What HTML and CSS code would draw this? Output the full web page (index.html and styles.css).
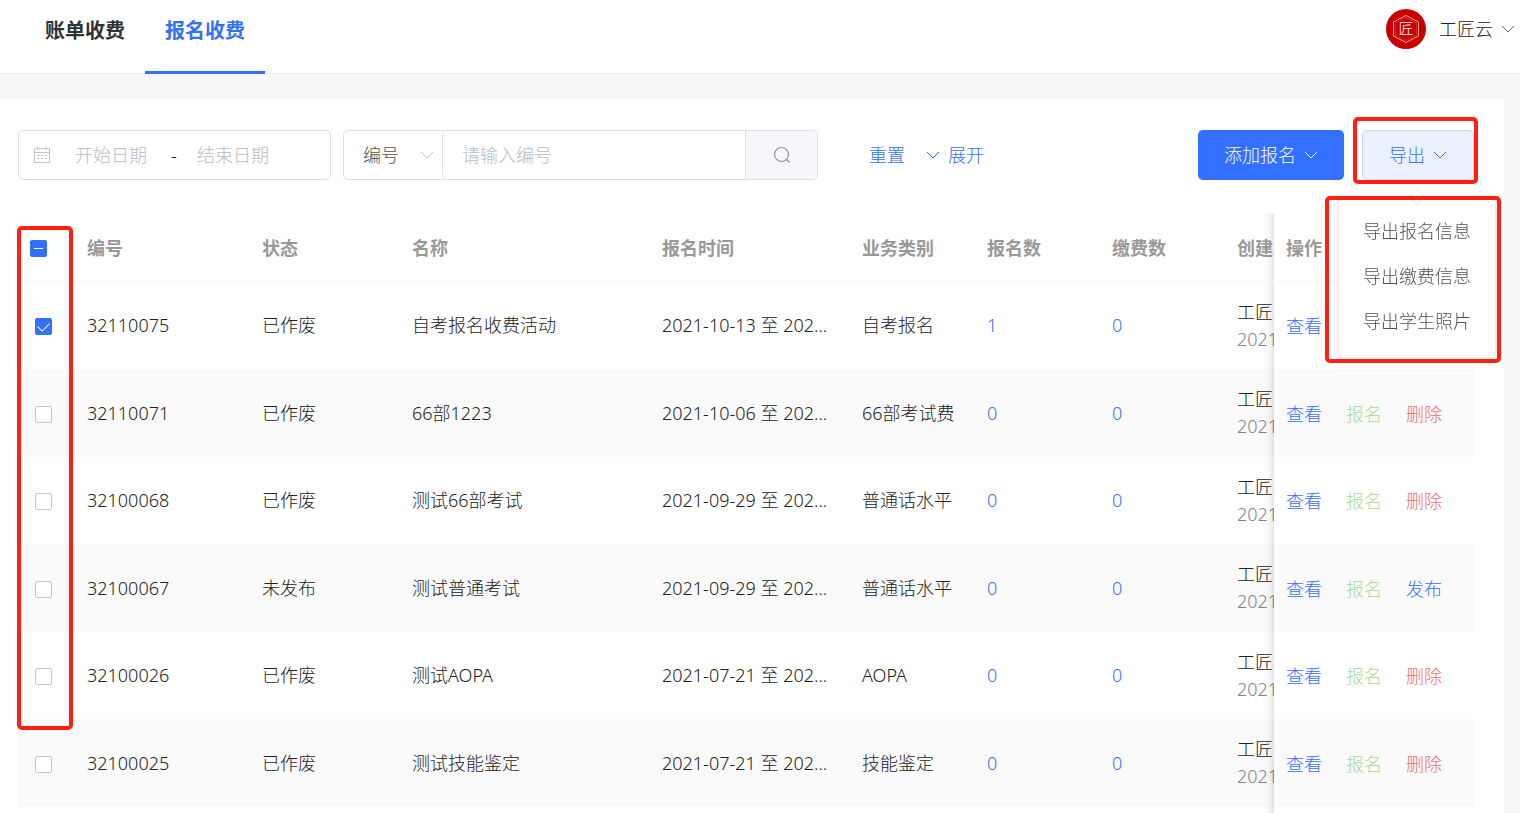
FILE: index.html
```html
<!DOCTYPE html>
<html lang="zh-CN">
<head>
    <meta charset="UTF-8">
    <title>报名收费</title>
    <link rel="stylesheet" href="styles.css">
</head>
<body>
    <svg class="sprite" aria-hidden="true">
        <symbol id="arrow" viewBox="0 0 14 8">
            <path d="M1 1l6 6 6-6" fill="none" stroke="currentColor" stroke-width="1"/>
        </symbol>
    </svg>

    <!-- 头部 -->
    <header class="header">
        <nav class="tabs">
            <a class="tab" href="#">账单收费</a>
            <a class="tab active" href="#">报名收费</a>
        </nav>
        <button class="user" type="button">
            <svg class="avatar" viewBox="0 0 40 40">
                <circle cx="20" cy="20" r="20" fill="#c80000"/>
                <path d="M20 6.500l12.500 6.500v14L20 33.500 7.500 27V13z" fill="none" stroke="#f0a0a0" stroke-width="1"/>
                <path d="M20 8.500l10.500 5.500v12L20 31.500 9.500 26V14z" fill="none" stroke="#d84848" stroke-width=".6"/>
                <text class="avatar-text" x="20" y="25" text-anchor="middle">匠</text>
            </svg>
            <span>工匠云</span>
            <svg class="arrow"><use href="#arrow"/></svg>
        </button>
    </header>

    <main class="panel">
        <!-- 搜索栏 -->
        <div class="toolbar">
            <div class="date-range">
                <svg class="icon-date" viewBox="0 0 18 18">
                    <path d="M1.500 2.500h15v14h-15zM1.500 6.500h15M5 .5v4M13 .5v4" fill="none" stroke="currentColor"/>
                    <path d="M4 9.500h2.500M7.800 9.500h2.500M11.500 9.500h2.500M4 12.500h2.500M7.800 12.500h2.500M11.500 12.500h2.500" stroke="currentColor" stroke-width="1.200"/>
                </svg>
                <input class="date-input" type="text" placeholder="开始日期" aria-label="开始日期">
                <span class="date-sep">-</span>
                <input class="date-input" type="text" placeholder="结束日期" aria-label="结束日期">
            </div>
            <div class="search">
                <div class="search-type">
                    <select class="search-select" aria-label="搜索类型">
                        <option>编号</option>
                    </select>
                    <svg class="arrow search-arrow"><use href="#arrow"/></svg>
                </div>
                <input class="search-input" type="text" placeholder="请输入编号" aria-label="请输入编号">
                <button class="search-btn" type="button" aria-label="搜索">
                    <svg class="icon-search" viewBox="0 0 18 18">
                        <circle cx="8.500" cy="8.500" r="7" fill="none" stroke="currentColor" stroke-width="1.200"/>
                        <path d="M13.500 13.500l3 3" stroke="currentColor" stroke-width="1.200"/>
                    </svg>
                </button>
            </div>
            <div class="links">
                <a class="link" href="#">重置</a>
                <a class="link more" href="#"><svg class="arrow"><use href="#arrow"/></svg>展开</a>
            </div>
            <div class="actions">
                <button class="btn btn-primary" type="button">添加报名<svg class="arrow"><use href="#arrow"/></svg></button>
                <div class="export">
                    <button class="btn btn-plain" type="button">导出<svg class="arrow"><use href="#arrow"/></svg></button>
                    <i class="mark mark-btn"></i>
                    <div class="menu">
                        <button class="menu-item" type="button">导出报名信息</button>
                        <button class="menu-item" type="button">导出缴费信息</button>
                        <button class="menu-item" type="button">导出学生照片</button>
                        <i class="mark mark-menu"></i>
                    </div>
                </div>
            </div>
        </div>

        <!-- 列表 -->
        <div class="table-box">
            <div class="table-scroll">
                <table class="table">
                    <colgroup>
                        <col class="w-check">
                        <col class="w-no">
                        <col class="w-status">
                        <col class="w-name">
                        <col class="w-time">
                        <col class="w-num">
                        <col class="w-num">
                        <col class="w-num">
                        <col class="w-creator">
                        <col class="w-ops">
                    </colgroup>
                    <thead>
                        <tr>
                            <th><input class="check half" type="checkbox" aria-label="全选"></th>
                            <th>编号</th>
                            <th>状态</th>
                            <th>名称</th>
                            <th>报名时间</th>
                            <th>业务类别</th>
                            <th>报名数</th>
                            <th>缴费数</th>
                            <th>创建人</th>
                            <th class="fixed">操作</th>
                        </tr>
                    </thead>
                    <tbody>
                        <tr>
                            <td class="sel"><input class="check" type="checkbox" aria-label="32110075" checked></td>
                            <td>32110075</td>
                            <td>已作废</td>
                            <td>自考报名收费活动</td>
                            <td>2021-10-13 至 202...</td>
                            <td>自考报名</td>
                            <td><a class="link" href="#">1</a></td>
                            <td><a class="link" href="#">0</a></td>
                            <td>工匠云<p class="date">2021-</p></td>
                            <td class="fixed"><a class="op" href="#">查看</a></td>
                        </tr>
                        <tr>
                            <td class="sel"><input class="check" type="checkbox" aria-label="32110071"></td>
                            <td>32110071</td>
                            <td>已作废</td>
                            <td>66部1223</td>
                            <td>2021-10-06 至 202...</td>
                            <td>66部考试费</td>
                            <td><a class="link" href="#">0</a></td>
                            <td><a class="link" href="#">0</a></td>
                            <td>工匠云<p class="date">2021-</p></td>
                            <td class="fixed"><a class="op" href="#">查看</a><a class="op green" href="#">报名</a><a class="op red" href="#">删除</a></td>
                        </tr>
                        <tr>
                            <td class="sel"><input class="check" type="checkbox" aria-label="32100068"></td>
                            <td>32100068</td>
                            <td>已作废</td>
                            <td>测试66部考试</td>
                            <td>2021-09-29 至 202...</td>
                            <td>普通话水平</td>
                            <td><a class="link" href="#">0</a></td>
                            <td><a class="link" href="#">0</a></td>
                            <td>工匠云<p class="date">2021-</p></td>
                            <td class="fixed"><a class="op" href="#">查看</a><a class="op green" href="#">报名</a><a class="op red" href="#">删除</a></td>
                        </tr>
                        <tr>
                            <td class="sel"><input class="check" type="checkbox" aria-label="32100067"></td>
                            <td>32100067</td>
                            <td>未发布</td>
                            <td>测试普通考试</td>
                            <td>2021-09-29 至 202...</td>
                            <td>普通话水平</td>
                            <td><a class="link" href="#">0</a></td>
                            <td><a class="link" href="#">0</a></td>
                            <td>工匠云<p class="date">2021-</p></td>
                            <td class="fixed"><a class="op" href="#">查看</a><a class="op green" href="#">报名</a><a class="op" href="#">发布</a></td>
                        </tr>
                        <tr>
                            <td class="sel"><input class="check" type="checkbox" aria-label="32100026"></td>
                            <td>32100026</td>
                            <td>已作废</td>
                            <td>测试AOPA</td>
                            <td>2021-07-21 至 202...</td>
                            <td>AOPA</td>
                            <td><a class="link" href="#">0</a></td>
                            <td><a class="link" href="#">0</a></td>
                            <td>工匠云<p class="date">2021-</p></td>
                            <td class="fixed"><a class="op" href="#">查看</a><a class="op green" href="#">报名</a><a class="op red" href="#">删除</a></td>
                        </tr>
                        <tr>
                            <td class="sel"><input class="check" type="checkbox" aria-label="32100025"></td>
                            <td>32100025</td>
                            <td>已作废</td>
                            <td>测试技能鉴定</td>
                            <td>2021-07-21 至 202...</td>
                            <td>技能鉴定</td>
                            <td><a class="link" href="#">0</a></td>
                            <td><a class="link" href="#">0</a></td>
                            <td>工匠云<p class="date">2021-</p></td>
                            <td class="fixed"><a class="op" href="#">查看</a><a class="op green" href="#">报名</a><a class="op red" href="#">删除</a></td>
                        </tr>
                    </tbody>
                    <tfoot>
                        <tr>
                            <td colspan="9"></td>
                            <td class="fixed"></td>
                        </tr>
                    </tfoot>
                </table>
            </div>
            <i class="mark mark-check"></i>
        </div>
    </main>
</body>
</html>
```
FILE: styles.css
```css
* {
    box-sizing: border-box;
}

body {
    margin: 0;
    background: #f7f8fa;
    color: #222;
    font-family: "Noto Sans", "Noto Sans CJK SC", sans-serif;
    font-size: 18px;
    font-weight: 300;
    line-height: 27px;
}

a {
    text-decoration: none;
}

button,
input,
select {
    margin: 0;
    padding: 0;
    border: 0;
    background: none;
    color: inherit;
    font: inherit;
    outline: none;
}

input::placeholder {
    color: #b8bcc4;
    opacity: 1;
}

.sprite {
    display: none;
}

.arrow {
    width: 14px;
    height: 8px;
    flex: none;
}

/* 头部 */
.header {
    display: flex;
    justify-content: space-between;
    align-items: flex-start;
    height: 74px;
    padding: 0 5px 0 25px;
    background: #fff;
    border-bottom: 1px solid #f0f0f2;
}

.tabs {
    display: flex;
}

.tab {
    height: 74px;
    padding: 0 20px;
    color: #303133;
    font-size: 20px;
    font-weight: bold;
    line-height: 62px;
}

.tab.active {
    color: #3370ff;
    border-bottom: 3px solid #3370ff;
}

.user {
    display: flex;
    align-items: center;
    gap: 8px;
    padding-top: 9px;
}

.avatar {
    width: 40px;
    height: 40px;
    margin-right: 5px;
}

.avatar-text {
    fill: #fff;
    font-size: 15px;
}

.user .arrow {
    color: #606266;
}

/* 内容 */
.panel {
    margin: 25px 16px 0 0;
    padding: 31px 30px 0 18px;
    background: #fff;
}

.toolbar {
    display: flex;
    align-items: center;
    margin-bottom: 33px;
}

.date-range {
    display: flex;
    align-items: center;
    width: 313px;
    height: 50px;
    padding: 0 14px;
    border: 1px solid #dcdfe6;
    border-radius: 5px;
}

.icon-date {
    width: 18px;
    height: 18px;
    margin-right: 24px;
    color: #c0c4cc;
}

.date-input {
    width: 86px;
}

.date-sep {
    width: 36px;
    padding-left: 10px;
}

.search {
    display: flex;
    width: 475px;
    height: 50px;
    margin-left: 12px;
    border: 1px solid #dcdfe6;
    border-radius: 5px;
}

.search-type {
    display: flex;
    align-items: center;
    width: 98px;
    color: #505256;
}

.search-select {
    width: 76px;
    height: 48px;
    padding-left: 19px;
    appearance: none;
}

.search-arrow {
    color: #c0c4cc;
}

.search-input {
    flex: 1;
    min-width: 0;
    padding-left: 19px;
    border-left: 1px solid #dcdfe6;
    border-radius: 5px 0 0 5px;
}

.search-btn {
    display: flex;
    align-items: center;
    justify-content: center;
    width: 72px;
    background: #f5f7fa;
    border-left: 1px solid #dcdfe6;
    border-radius: 0 4px 4px 0;
    color: #909399;
}

.icon-search {
    width: 18px;
    height: 18px;
}

.links {
    display: flex;
    gap: 21px;
    margin-left: 51px;
}

.link {
    color: #3370ff;
}

.more {
    display: flex;
    align-items: center;
    gap: 8px;
}

.actions {
    display: flex;
    gap: 18px;
    margin-left: auto;
}

.btn {
    display: flex;
    align-items: center;
    gap: 8px;
    height: 50px;
    padding: 0 26px;
    border-radius: 5px;
}

.btn-primary {
    background: #3370ff;
    color: #fff;
}

.btn-plain {
    background: #ebf1ff;
    border: 1px solid #c2d4ff;
    color: #3370ff;
}

/* 导出菜单 */
.export {
    position: relative;
    z-index: 10;
}

.menu {
    position: absolute;
    top: 66px;
    right: -22px;
    display: flex;
    flex-direction: column;
    padding: 12px 0 13px;
    background: #fff;
    border: 1px solid #ebeef5;
    border-radius: 5px;
    box-shadow: 0 2px 12px rgba(0, 0, 0, .1);
}

.menu::before {
    content: "";
    position: absolute;
    top: -6px;
    left: 72px;
    width: 10px;
    height: 10px;
    background: #fff;
    border: 1px solid #ebeef5;
    transform: rotate(45deg);
}

.menu-item {
    padding: 0 24px;
    color: #505256;
    line-height: 45px;
    text-align: left;
    white-space: nowrap;
}

/* 红色标注框 */
.mark {
    position: absolute;
    border: 4px solid #ff2010;
    border-radius: 5px;
    pointer-events: none;
}

.mark-btn {
    inset: -13px -4px -4px -9px;
}

.mark-menu {
    inset: -1px -6px -6px -14px;
}

.mark-check {
    top: 13px;
    bottom: 83px;
    left: -1px;
    width: 56px;
    z-index: 3;
}

/* 表格 */
.table-box {
    position: relative;
}

.table-scroll {
    overflow: hidden;
}

.table {
    width: 100%;
    min-width: 1657px;
    table-layout: fixed;
    border-spacing: 0;
}

.w-check {
    width: 57px;
}

.w-no {
    width: 175px;
}

.w-status {
    width: 150px;
}

.w-name {
    width: 250px;
}

.w-time,
.w-ops {
    width: 200px;
}

.w-num {
    width: 125px;
}

.w-creator {
    width: 250px;
}

.table th,
.table td {
    padding: 0 12px;
    background: #fff;
    text-align: left;
    white-space: nowrap;
}

.table th {
    height: 69px;
    padding-top: 2px;
    border-bottom: 1px solid #f5f5f6;
    color: #999;
    font-weight: bold;
}

.table td {
    height: 87px;
}

.table tbody tr:nth-child(even) td {
    height: 88px;
    background: #fafafa;
}

.table tfoot td {
    height: 6px;
}

.table td.sel {
    padding-top: 2px;
    padding-left: 17px;
}

.table .fixed {
    position: sticky;
    right: 0;
}

.table td.fixed {
    padding-top: 2px;
}

.fixed::before {
    content: "";
    position: absolute;
    top: 0;
    bottom: 0;
    left: -10px;
    width: 10px;
    background: linear-gradient(to left, rgba(0, 0, 0, .1), rgba(0, 0, 0, .03) 50%, rgba(0, 0, 0, 0));
}

.date {
    margin: 0;
    color: #808388;
}

.op {
    margin-right: 24px;
    color: #3370ff;
}

.green {
    color: #a8dc90;
}

.red {
    color: #f56c6c;
}

.check {
    display: block;
    width: 17px;
    height: 17px;
    border: 1px solid #c4c6cc;
    border-radius: 2px;
    background: #fff;
    appearance: none;
}

.check:checked,
.check.half {
    display: flex;
    align-items: center;
    justify-content: center;
    background: #3370ff;
    border-color: #3370ff;
}

.check:checked::before {
    content: "";
    width: 10px;
    height: 6px;
    margin-bottom: 3px;
    border: solid #fff;
    border-width: 0 0 1px 1px;
    transform: rotate(-45deg);
}

.check.half::before {
    content: "";
    width: 9px;
    height: 1px;
    background: #fff;
}
```
